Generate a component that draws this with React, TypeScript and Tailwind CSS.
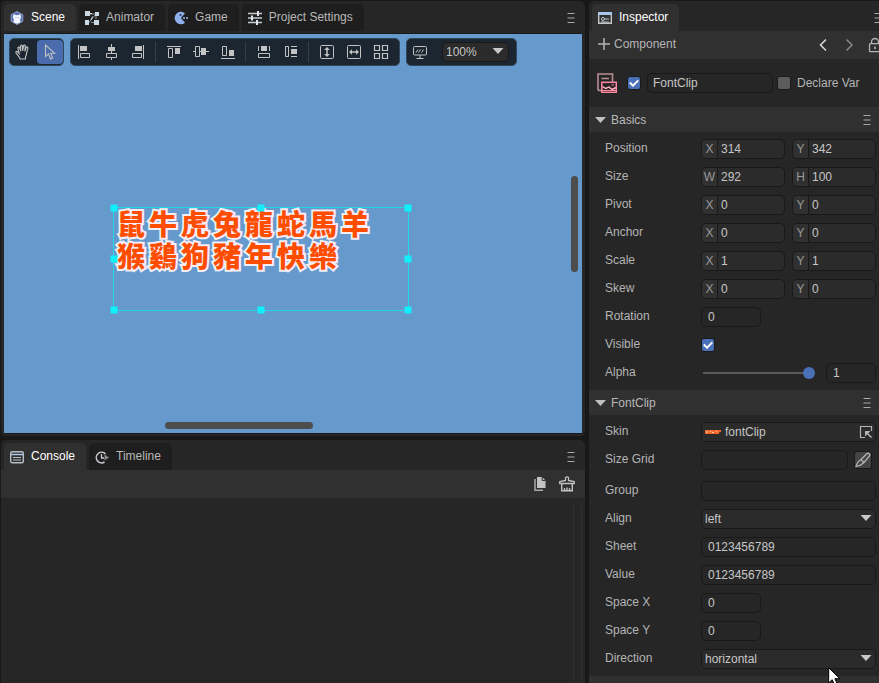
import React, { useId } from "react";

type Children = { children?: React.ReactNode };

/* ---------- icons ---------- */

function Icon({ children, size = 16, className = "" }: Children & { size?: number; className?: string }) {
  return (
    <svg width={size} height={size} viewBox={`0 0 ${size} ${size}`} fill="none" stroke="currentColor" aria-hidden="true" className={`shrink-0 ${className}`}>
      {children}
    </svg>
  );
}

const SceneIcon = () => (
  <Icon size={14}>
    <path d="M7 0.5 12.8 3.7v6.6L7 13.5 1.2 10.3V3.7z" fill="#5a72b4" stroke="#8b9bc8" />
    <path d="M3.500 3.200 7 4.300l3.500-1.100.6 3.400-1 1.600.4 3L7 12.800l-3.500-1.600.4-3-1-1.600z" fill="#f4f7ff" stroke="none" />
    <path d="M5.500 6.500h1M8 6.500h1" stroke="#8b9bc8" />
  </Icon>
);

const AnimatorIcon = () => (
  <Icon size={14}>
    <path d="M3 3h8L3.500 12M10.500 11.500H6M11 3v5" stroke="#8b95a0" />
    <path d="M0 0h5v5H0zM10 1h4v4h-4zM0 9h4v5H0zM9 9h5v5H9z" fill="#cdd9e2" stroke="none" />
    <path d="M5 2.500h2M7.500 5.500 6 9" stroke="#cdd9e2" />
  </Icon>
);

const GameIcon = () => (
  <Icon size={14}>
    <path d="M7 7 11 2.200A6.300 6.300 0 1 0 11 11.800z" fill="#8fb0ea" stroke="none" />
    <circle cx="6.500" cy="4" r="1" fill="#26324d" stroke="none" />
    <path d="M9 6h2v2H9zM12 6h2v2h-2z" fill="#7f95bd" stroke="none" />
  </Icon>
);

const SettingsIcon = () => (
  <Icon size={14}>
    <path d="M0 2.500h14M0 7h14M0 11.500h14" stroke="#c9ccd0" strokeWidth="1.400" />
    <path d="M9 0h2v5H9zM3 4.500h2v5H3zM8 9h2v5H8z" fill="#dfe6ec" stroke="none" />
  </Icon>
);

const InspectorIcon = () => (
  <Icon size={14}>
    <path d="M.7 1.700h12.600v10.600H.7z" stroke="#c3c8cc" strokeWidth="1.400" />
    <path d="M0 1h14v3H0z" fill="#a9c5e8" stroke="none" />
    <circle cx="5" cy="8" r="1.500" stroke="#c3c8cc" />
    <path d="M6.500 8H11M3 11h8" stroke="#c3c8cc" />
  </Icon>
);

const ConsoleIcon = () => (
  <Icon size={14}>
    <rect x=".7" y="1.700" width="12.600" height="11" rx="1.500" stroke="#b9bec3" strokeWidth="1.400" />
    <path d="M1 4.500h12" stroke="#a9c5e8" strokeWidth="1.500" />
    <path d="M3 7.500h8M3 10h8" stroke="#b9bec3" strokeWidth="1.200" />
  </Icon>
);

const TimelineIcon = () => (
  <Icon size={14}>
    <path d="M9.500 12A5.300 5.300 0 1 1 10.500 4" stroke="#c9ccd0" strokeWidth="1.500" />
    <path d="M6.500 4v4h2.500" stroke="#c9ccd0" strokeWidth="1.300" />
    <path d="M9.500 4.500 14 7.500l-4.500 3z" fill="#858b91" stroke="none" />
  </Icon>
);

const MenuIcon = () => (
  <Icon size={10}>
    <path d="M1.500 .5h7M1.500 5h7M1.500 9.500h7" stroke="#a8a8a8" />
  </Icon>
);

const HandIcon = () => (
  <Icon>
    <path
      d="M5 15c0-1.200-.8-2-1.700-3.200L1 8.800c-.7-1 .6-1.900 1.500-1L4.200 9.500 2.900 4.300c-.3-1.300 1.300-1.700 1.700-.5l1.200 3.400-.3-5c0-1.300 1.700-1.400 1.800-.1l.4 4.700.8-4.900c.2-1.200 1.900-1 1.800.3l-.5 5 1.400-3.700c.5-1.200 2-.6 1.700.6l-1.300 5c-.2 1.200-.1 2.500-1.100 3.600V15z"
      strokeWidth="1.100"
    />
  </Icon>
);

const ArrowIcon = () => (
  <Icon>
    <path d="M3.500 1v11.500l3-2.600 2 5 2.200-1-2.100-4.700h4z" strokeWidth="1.100" />
  </Icon>
);

const AlignLeftIcon = () => (
  <Icon>
    <path d="M2.500 1v14M4.500 9.500h9v4h-9z" />
    <path d="M4 2h7v5H4z" fill="currentColor" stroke="none" />
  </Icon>
);
const AlignCenterIcon = () => (
  <Icon>
    <path d="M8.500 0v16" />
    <path d="M3.500 9.500h10v4h-10z" fill="#1b2631" />
    <path d="M5 3h7v4H5z" fill="currentColor" stroke="none" />
  </Icon>
);
const AlignRightIcon = () => (
  <Icon>
    <path d="M13.500 1v14M2.500 9.500h9v4h-9z" />
    <path d="M5 2h7v5H5z" fill="currentColor" stroke="none" />
  </Icon>
);
const AlignTopIcon = () => (
  <Icon>
    <path d="M1 2.500h14M2.500 4.500h4v9h-4z" />
    <path d="M9 4h5v6H9z" fill="currentColor" stroke="none" />
  </Icon>
);
const AlignMiddleIcon = () => (
  <Icon>
    <path d="M0 7.500h16" />
    <path d="M2.500 2.500h4v10h-4z" fill="#1b2631" />
    <path d="M8 4h5v7H8z" fill="currentColor" stroke="none" />
  </Icon>
);
const AlignBottomIcon = () => (
  <Icon>
    <path d="M1 14.500h14M2.500 2.500h4v9h-4z" />
    <path d="M9 6h5v6H9z" fill="currentColor" stroke="none" />
  </Icon>
);
const MatchWidthIcon = () => (
  <Icon>
    <path d="M2.500 2v5M13.500 2v5M2.500 9.500h11v4h-11z" />
    <path d="M5 2h6v5H5z" fill="currentColor" stroke="none" />
  </Icon>
);
const MatchHeightIcon = () => (
  <Icon>
    <path d="M2.500 2.500h3v10h-3zM8 2.500h6M8 12.500h6" />
    <path d="M8 5h6v5H8z" fill="currentColor" stroke="none" />
  </Icon>
);
const StretchVerticalIcon = () => (
  <Icon>
    <rect x="1.500" y="1.500" width="13" height="13" rx="1" />
    <path d="M8 5v6" strokeWidth="1.500" />
    <path d="m8 3 2.800 3H5.200zM8 13l2.800-3H5.200z" fill="currentColor" stroke="none" />
  </Icon>
);
const StretchHorizontalIcon = () => (
  <Icon>
    <rect x="1.500" y="1.500" width="13" height="13" rx="1" />
    <path d="M5 8h6" strokeWidth="1.500" />
    <path d="m3 8 3-2.800v5.600zM13 8l-3-2.800v5.600z" fill="currentColor" stroke="none" />
  </Icon>
);
const GridIcon = () => (
  <Icon>
    <path d="M1.500 1.500h5v5h-5zM9.500 1.500h5v5h-5zM1.500 9.500h5v5h-5zM9.500 9.500h5v5h-5z" strokeWidth="1.200" />
  </Icon>
);
const ScreenIcon = () => (
  <Icon>
    <rect x="1.500" y="2.500" width="13" height="8.500" rx="1" />
    <path d="M8 11v3M4.500 14.500h7M4 8.500l2-3M6.500 8.500l2-3M9.500 8.500l2-3" />
  </Icon>
);
const CopyIcon = () => (
  <Icon>
    <path d="M5 1h5l3.500 3.500V12H5z" fill="#c3c3c3" stroke="none" />
    <path d="M10.200 1v3.500h3.300" stroke="#303030" />
    <path d="M3 3v11.200h8" stroke="#a6a6a6" strokeWidth="1.500" />
  </Icon>
);
const BrushIcon = () => (
  <Icon>
    <path d="M6.500 4.500V1.500L8 .7l1.500.8v3L15.300 5.700V7.500H.7V5.700z" strokeWidth="1.300" strokeLinejoin="round" />
    <path d="M2.700 7.500v7.300h10.600V7.500M5.500 14.500V12M8 14.500V11.500M10.500 14.500V12" strokeWidth="1.400" />
  </Icon>
);
const NodeIcon = () => (
  <Icon size={20}>
    <path d="M5 17.500H2.800C1.900 17.500 1 16.900 1 16V1h14.500v8" stroke="#b98f96" strokeWidth="1.600" />
    <path d="M4.500 5.500h7.500" stroke="#b98f96" strokeWidth="1.400" />
    <rect x="4.800" y="9.300" width="14.500" height="10" fill="#2a2226" stroke="#ff8aa2" strokeWidth="1.500" />
    <path d="m5.500 13.500 3 2 3.500-1.500 3 2.500 4-2" stroke="#ffb3c1" strokeWidth="1.500" />
    <path d="M14.500 12h2.500M5 17.500h14" stroke="#ff8aa2" strokeWidth="1.200" />
  </Icon>
);
const LockIcon = () => (
  <Icon>
    <path d="M4.500 7V5a3.500 3.500 0 0 1 7 0v2" strokeWidth="1.300" />
    <rect x="2.500" y="6.700" width="11" height="8" rx="1" strokeWidth="1.300" />
    <path d="M8 9.500v2.500" strokeWidth="1.600" />
  </Icon>
);
const PickIcon = () => (
  <Icon size={14}>
    <path d="M12.500 6V1.500h-11v11H6" strokeWidth="1.200" />
    <path d="M6 6h5.500L6 11.500z" fill="currentColor" stroke="none" />
    <path d="m8 8 4.500 4.500" strokeWidth="1.500" />
  </Icon>
);
const KnifeIcon = () => (
  <Icon>
    <path d="M1 14.500c1-3.500 3-6 5-7l3 3c-2 2-4.500 3.500-8 4zM6 7.500 12 1.500c1.500-1 3.500.8 2.500 2.500l-5.500 6.500" strokeWidth="1.200" />
  </Icon>
);
const Caret = ({ className = "" }: { className?: string }) => (
  <svg width="12" height="6" viewBox="0 0 12 6" aria-hidden="true" className={`pointer-events-none shrink-0 ${className}`}>
    <path d="M0.500 0h11L6 6z" fill="#c8c8c8" />
  </svg>
);

/* ---------- shared controls ---------- */

const fieldBox = "h-5 min-w-0 rounded-[5px] border border-[#191919] bg-[#2b2b2b]";
const fieldText = "min-w-0 bg-transparent text-[#c6c6c6] outline-none";

function Tab({ icon, label, active = false }: { icon: React.ReactNode; label: string; active?: boolean }) {
  return (
    <button
      type="button"
      role="tab"
      aria-selected={active}
      className={`flex h-[27px] items-center gap-[7px] rounded-t-[5px] pr-[11px] pl-[6px] whitespace-nowrap ${
        active ? "bg-[#303030] text-white" : "bg-[#1e1e1e] text-[#b8b8b8]"
      }`}
    >
      {icon}
      <span className="pb-0.5">{label}</span>
    </button>
  );
}

function TabBar({ children }: Children) {
  return (
    <div className="flex shrink-0 items-center justify-between pt-[3px] pr-[9px] pl-[3px]">
      <div role="tablist" className="flex gap-[3px]">{children}</div>
      <button type="button" aria-label="Panel menu"><MenuIcon /></button>
    </div>
  );
}

function Tool({ label, active = false, children }: Children & { label: string; active?: boolean }) {
  return (
    <button
      type="button"
      aria-label={label}
      className={`flex h-6 w-[26px] items-center justify-center rounded-[4px] text-[#c3c3c3] ${active ? "bg-[#4a6bac]" : ""}`}
    >
      {children}
    </button>
  );
}

const ToolGroup = ({ children }: Children) => (
  <div className="flex h-7 items-center gap-px rounded-[5px] border border-[#32475c] bg-[#1b2631]">{children}</div>
);
const Divider = () => <span className="mr-1 ml-[3px] h-5 w-px bg-[#33404c]" />;

function Check({ id, label, on = false }: { id?: string; label?: string; on?: boolean }) {
  return (
    <span className="grid h-[14px] w-[14px] shrink-0 place-items-center">
      <input
        id={id}
        type="checkbox"
        aria-label={label}
        defaultChecked={on}
        className="col-start-1 row-start-1 h-[14px] w-[14px] appearance-none rounded-[3px] border border-[#191919] bg-[#5c5c5e] checked:bg-[#4a70b8]"
      />
      {on && (
        <svg width="10" height="8" viewBox="0 0 10 8" className="pointer-events-none col-start-1 row-start-1" aria-hidden="true">
          <path d="M.8 3.500 4 6.700 9.300 1.300" fill="none" stroke="#fff" strokeWidth="1.900" />
        </svg>
      )}
    </span>
  );
}

function Section({ title, children }: Children & { title: string }) {
  return (
    <section>
      <div className="flex h-[25px] items-center justify-between bg-[#303030] pr-[7px] pl-[6px] text-[#b8b8b8]">
        <button type="button" className="flex items-center gap-[5px]">
          <svg width="11" height="6" viewBox="0 0 11 6" aria-hidden="true"><path d="M0 0h11L5.500 6z" fill="#c0c0c0" /></svg>
          {title}
        </button>
        <button type="button" aria-label={`${title} menu`}><MenuIcon /></button>
      </div>
      <div className="py-[3px]">{children}</div>
    </section>
  );
}

function Row({ label, htmlFor, children }: Children & { label: string; htmlFor?: string }) {
  return (
    <div className="flex h-7 items-center pr-[3px] pl-4">
      <label htmlFor={htmlFor} className="w-24 shrink-0 pb-0.5 text-[#b4b4b4]">{label}</label>
      <div className="flex min-w-0 flex-1 items-center">{children}</div>
    </div>
  );
}

function PairRow({ label, axes, values }: { label: string; axes: [string, string]; values: [string, string] }) {
  const id = useId();
  return (
    <Row label={label} htmlFor={id + "0"}>
      <div className="grid flex-1 grid-cols-2 gap-[7px]">
        {axes.map((axis, i) => (
          <div key={axis} className={`${fieldBox} flex overflow-hidden`}>
            <label htmlFor={id + i} className="flex w-4 shrink-0 items-center justify-center border-r border-[#191919] bg-[#303030] text-[#9a9a9a]">
              {axis}
            </label>
            <input id={id + i} defaultValue={values[i]} className={`${fieldText} w-full pl-[3px]`} />
          </div>
        ))}
      </div>
    </Row>
  );
}

function TextRow({ label, value = "", short = false }: { label: string; value?: string; short?: boolean }) {
  const id = useId();
  return (
    <Row label={label} htmlFor={id}>
      <input id={id} defaultValue={value} className={`${fieldBox} ${fieldText} px-[6px] ${short ? "w-[60px]" : "w-full"}`} />
    </Row>
  );
}

function SelectRow({ label, value }: { label: string; value: string }) {
  const id = useId();
  return (
    <Row label={label} htmlFor={id}>
      <div className="relative w-full">
        <select id={id} defaultValue={value} className={`${fieldBox} block w-full appearance-none pr-5 pl-[3px] text-[#c6c6c6] outline-none`}>
          <option>{value}</option>
        </select>
        <Caret className="absolute top-[6px] right-1" />
      </div>
    </Row>
  );
}

/* ---------- scene ---------- */

const handles = [
  "top-0 left-0", "top-0 left-1/2", "top-0 left-full",
  "top-1/2 left-0", "top-1/2 left-full",
  "top-full left-0", "top-full left-1/2", "top-full left-full",
];

function ClipText() {
  return (
    <div className="-mt-px pl-px font-['Noto_Sans_CJK_TC',sans-serif] text-[28px] leading-8 font-black text-[#ff4d00] [-webkit-text-stroke:4px_#f3eef6] [paint-order:stroke_fill]">
      {["鼠牛虎兔龍蛇馬羊", "猴鷄狗豬年快樂"].map((line) => (
        <div key={line} className="flex">
          {[...line].map((glyph) => (
            <span key={glyph} className="w-8 text-center">{glyph}</span>
          ))}
        </div>
      ))}
    </div>
  );
}

function ScenePanel() {
  return (
    <section className="flex min-h-0 flex-1 flex-col rounded-[5px] bg-[#262626]">
      <TabBar>
        <Tab icon={<SceneIcon />} label="Scene" active />
        <Tab icon={<AnimatorIcon />} label="Animator" />
        <Tab icon={<GameIcon />} label="Game" />
        <Tab icon={<SettingsIcon />} label="Project Settings" />
      </TabBar>
      <div className="relative mx-[3px] mt-[2px] mb-[2px] min-h-0 flex-1 overflow-hidden border-t border-b border-[#191919] bg-[#6699cc]">
        <div className="flex gap-[6px] px-[5px] pt-[4px]">
          <ToolGroup>
            <Tool label="Pan"><HandIcon /></Tool>
            <Tool label="Select" active><ArrowIcon /></Tool>
          </ToolGroup>
          <ToolGroup>
            <Tool label="Align left"><AlignLeftIcon /></Tool>
            <Tool label="Align center"><AlignCenterIcon /></Tool>
            <Tool label="Align right"><AlignRightIcon /></Tool>
            <Divider />
            <Tool label="Align top"><AlignTopIcon /></Tool>
            <Tool label="Align middle"><AlignMiddleIcon /></Tool>
            <Tool label="Align bottom"><AlignBottomIcon /></Tool>
            <Divider />
            <Tool label="Same width"><MatchWidthIcon /></Tool>
            <Tool label="Same height"><MatchHeightIcon /></Tool>
            <Divider />
            <Tool label="Stretch vertically"><StretchVerticalIcon /></Tool>
            <Tool label="Stretch horizontally"><StretchHorizontalIcon /></Tool>
            <Tool label="Arrange in grid"><GridIcon /></Tool>
            <span className="w-1" />
          </ToolGroup>
          <ToolGroup>
            <Tool label="Resolution"><ScreenIcon /></Tool>
            <div className="relative mr-[7px] ml-2 w-[67px]">
              <select aria-label="Zoom" className={`${fieldBox} block w-full appearance-none pl-[3px] text-[#c6c6c6] outline-none`}>
                <option>100%</option>
              </select>
              <Caret className="absolute top-[6px] right-[5px]" />
            </div>
          </ToolGroup>
        </div>

        <div className="absolute top-[173px] left-[109px] h-[104px] w-[296px] border border-[#22d8e8]">
          <ClipText />
          {handles.map((place) => (
            <span key={place} className={`absolute h-[7px] w-[7px] -translate-x-1/2 -translate-y-1/2 bg-[#10f0fa] ${place}`} />
          ))}
        </div>

        <div className="absolute top-[142px] right-1 h-24 w-[7px] rounded-full bg-[#4d4d4d]" />
        <div className="absolute bottom-1 left-[161px] h-[7px] w-[148px] rounded-full bg-[#4d4d4d]" />
      </div>
    </section>
  );
}

function ConsolePanel() {
  return (
    <section className="flex h-[243px] shrink-0 flex-col rounded-t-[5px] bg-[#262626]">
      <TabBar>
        <Tab icon={<ConsoleIcon />} label="Console" active />
        <Tab icon={<TimelineIcon />} label="Timeline" />
      </TabBar>
      <div className="flex h-7 shrink-0 items-center justify-end gap-[11px] bg-[#303030] pr-[10px] text-[#c3c3c3]">
        <button type="button" aria-label="Copy"><CopyIcon /></button>
        <button type="button" aria-label="Clear"><BrushIcon /></button>
      </div>
      <div className="flex flex-1 justify-end pt-1 pr-[3px]">
        <div className="w-[9px] rounded-t-full border border-b-0 border-[#303030]" />
      </div>
    </section>
  );
}

/* ---------- inspector ---------- */

function Inspector() {
  return (
    <section className="flex w-[290px] shrink-0 flex-col overflow-hidden rounded-tl-[5px] bg-[#262626]">
      <div className="flex shrink-0 items-center justify-between pt-[3px] pl-[3px]">
        <div role="tablist"><Tab icon={<InspectorIcon />} label="Inspector" active /></div>
        <button type="button" aria-label="Panel menu" className="-mr-1"><MenuIcon /></button>
      </div>
      <div className="flex h-7 shrink-0 items-center justify-between bg-[#303030] pl-[9px] text-[#b4b4b4]">
        <button type="button" className="flex items-center gap-[4px] pb-0.5">
          <Icon size={12}><path d="M6 0v12M0 6h12" strokeWidth="1.500" /></Icon>
          Component
        </button>
        <div className="-mr-1 flex items-center gap-[10px]">
          <button type="button" aria-label="Back"><Icon className="text-[#d6d6d6]"><path d="M11 2.500 5.500 8l5.500 5.500" strokeWidth="1.600" /></Icon></button>
          <button type="button" aria-label="Forward"><Icon className="text-[#848484]"><path d="M5.500 2.500 11 8l-5.500 5.500" strokeWidth="1.600" /></Icon></button>
          <button type="button" aria-label="Lock"><LockIcon /></button>
        </div>
      </div>
      <div className="flex h-12 shrink-0 items-center pl-2">
        <NodeIcon />
        <span className="mr-[6px] ml-[10px] flex"><Check label="Enabled" on /></span>
        <input aria-label="Name" defaultValue="FontClip" className={`${fieldBox} ${fieldText} mr-[4px] w-[126px] px-[5px]`} />
        <Check id="declare-var" />
        <label htmlFor="declare-var" className="ml-[6px] text-[#b4b4b4]">Declare Var</label>
      </div>

      <Section title="Basics">
        <PairRow label="Position" axes={["X", "Y"]} values={["314", "342"]} />
        <PairRow label="Size" axes={["W", "H"]} values={["292", "100"]} />
        <PairRow label="Pivot" axes={["X", "Y"]} values={["0", "0"]} />
        <PairRow label="Anchor" axes={["X", "Y"]} values={["0", "0"]} />
        <PairRow label="Scale" axes={["X", "Y"]} values={["1", "1"]} />
        <PairRow label="Skew" axes={["X", "Y"]} values={["0", "0"]} />
        <TextRow label="Rotation" value="0" short />
        <Row label="Visible" htmlFor="visible"><Check id="visible" on /></Row>
        <Row label="Alpha" htmlFor="alpha">
          <input
            id="alpha"
            type="range"
            min={0}
            max={1}
            step={0.01}
            defaultValue={1}
            className="mr-[11px] ml-[2px] h-3 w-full min-w-0 flex-1 appearance-none bg-transparent [&::-webkit-slider-runnable-track]:h-[2px] [&::-webkit-slider-runnable-track]:bg-[#5a5a5a] [&::-webkit-slider-thumb]:-mt-[5px] [&::-webkit-slider-thumb]:h-3 [&::-webkit-slider-thumb]:w-3 [&::-webkit-slider-thumb]:appearance-none [&::-webkit-slider-thumb]:rounded-full [&::-webkit-slider-thumb]:bg-[#4a70b8]"
          />
          <input aria-label="Alpha value" defaultValue="1" className={`${fieldBox} ${fieldText} w-[50px] px-[6px]`} />
        </Row>
      </Section>

      <Section title="FontClip">
        <Row label="Skin" htmlFor="skin">
          <div className={`${fieldBox} flex w-full items-center gap-1 pr-[2px] pl-[3px]`}>
            <svg width="16" height="6" viewBox="0 0 16 6" className="shrink-0" aria-hidden="true">
              <path d="M0 1h16v2l-2 .5V5H0z" fill="#f0692c" />
              <path d="M1 3h2M5 2.500h1M7 3.500h2M11 2.500h1" stroke="#ffc9a8" />
            </svg>
            <input id="skin" defaultValue="fontClip" className={`${fieldText} flex-1`} />
            <button type="button" aria-label="Pick skin" className="text-[#b4b4b4]"><PickIcon /></button>
          </div>
        </Row>
        <div className="pb-[3px]">
          <Row label="Size Grid" htmlFor="size-grid">
            <input id="size-grid" className={`${fieldBox} ${fieldText} mr-[6px] flex-1 px-[6px]`} />
            <button type="button" aria-label="Edit grid" className="mr-1 flex h-[18px] w-[18px] items-center justify-center rounded-[3px] border border-[#191919] bg-[#454545] text-[#b8b8b8]">
              <KnifeIcon />
            </button>
          </Row>
        </div>
        <TextRow label="Group" />
        <SelectRow label="Align" value="left" />
        <TextRow label="Sheet" value="0123456789" />
        <TextRow label="Value" value="0123456789" />
        <TextRow label="Space X" value="0" short />
        <TextRow label="Space Y" value="0" short />
        <SelectRow label="Direction" value="horizontal" />
      </Section>
      <div className="flex-1 bg-[#303030]" />
    </section>
  );
}

export default function App() {
  return (
    <div className="relative flex h-screen gap-[4px] overflow-hidden bg-[#181818] pt-px pl-px font-['Liberation_Sans',Arial,sans-serif] text-xs leading-4">
      <main className="flex min-w-0 flex-1 flex-col gap-[4px]">
        <ScenePanel />
        <ConsolePanel />
      </main>
      <Inspector />
      <svg width="14" height="20" viewBox="0 0 14 20" className="pointer-events-none absolute right-[37px] bottom-[-4px]" aria-hidden="true">
        <path d="M.7.800v15.200l3.500-3.300 2.500 5.800 2.700-1.200-2.500-5.600h5z" fill="#fff" stroke="#000" />
      </svg>
    </div>
  );
}
